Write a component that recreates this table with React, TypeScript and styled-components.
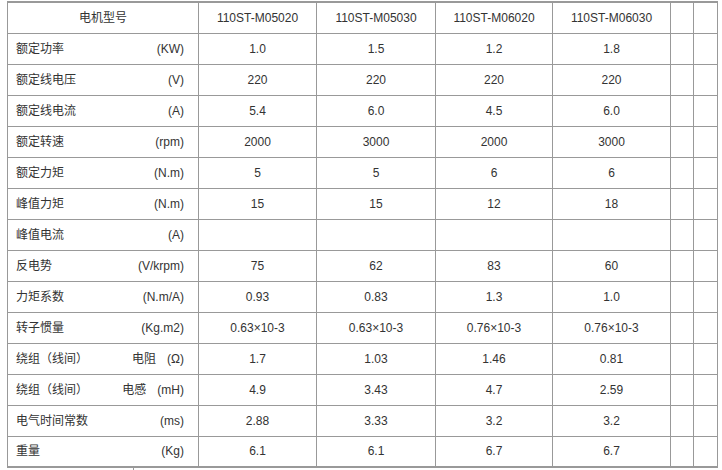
import styled, { createGlobalStyle } from 'styled-components'

const GlobalStyle = createGlobalStyle`
  html, body {
    margin: 0;
    padding: 0;
    background: #fff;
  }
`

type Row = {
  label: string
  sub?: string
  unit: string
  values: string[]
}

const models = ['110ST-M05020', '110ST-M05030', '110ST-M06020', '110ST-M06030']

const rows: Row[] = [
  { label: '额定功率', unit: '(KW)', values: ['1.0', '1.5', '1.2', '1.8'] },
  { label: '额定线电压', unit: '(V)', values: ['220', '220', '220', '220'] },
  { label: '额定线电流', unit: '(A)', values: ['5.4', '6.0', '4.5', '6.0'] },
  { label: '额定转速', unit: '(rpm)', values: ['2000', '3000', '2000', '3000'] },
  { label: '额定力矩', unit: '(N.m)', values: ['5', '5', '6', '6'] },
  { label: '峰值力矩', unit: '(N.m)', values: ['15', '15', '12', '18'] },
  { label: '峰值电流', unit: '(A)', values: ['', '', '', ''] },
  { label: '反电势', unit: '(V/krpm)', values: ['75', '62', '83', '60'] },
  { label: '力矩系数', unit: '(N.m/A)', values: ['0.93', '0.83', '1.3', '1.0'] },
  { label: '转子惯量', unit: '(Kg.m2)', values: ['0.63×10-3', '0.63×10-3', '0.76×10-3', '0.76×10-3'] },
  { label: '绕组（线间）', sub: '电阻', unit: '(Ω)', values: ['1.7', '1.03', '1.46', '0.81'] },
  { label: '绕组（线间）', sub: '电感', unit: '(mH)', values: ['4.9', '3.43', '4.7', '2.59'] },
  { label: '电气时间常数', unit: '(ms)', values: ['2.88', '3.33', '3.2', '3.2'] },
  { label: '重量', unit: '(Kg)', values: ['6.1', '6.1', '6.7', '6.7'] },
]

const widths = [191, 118, 119, 117, 118, 23, 24]

const Page = styled.div`
  padding: 1px 0 0 7px;
  font-family: 'Liberation Sans', Arial, 'Noto Sans CJK SC', sans-serif;
  font-size: 12px;
  color: #333;
`

const Table = styled.table`
  width: 710px;
  table-layout: fixed;
  border-collapse: collapse;
  border-top: 2px solid #999;
  border-bottom: 2px solid #999;
`

const Tr = styled.tr`
  height: 31px;
`

const Cell = styled.td`
  border: 1px solid #999;
  padding: 0;
  text-align: center;
  vertical-align: middle;
  line-height: 16px;
`

const NameCell = styled(Cell)`
  text-align: left;
  padding: 0 14px 0 8px;
`

const NameLine = styled.div`
  display: flex;
  justify-content: space-between;
  align-items: center;
  white-space: nowrap;
`

const Sub = styled.span`
  margin-left: auto;
  margin-right: 11px;
`

const Below = styled.div`
  height: 2px;
  margin-left: 126px;
  border-left: 1px solid #999;
`

const App = () => {
  return (
    <>
      <GlobalStyle />
      <Page>
        <Table>
          <colgroup>
            {widths.map((w, i) => (
              <col key={i} style={{ width: w }} />
            ))}
          </colgroup>
          <tbody>
            <Tr>
              <Cell>{'电机型号'}</Cell>
              {models.map((m) => (
                <Cell key={m}>{m}</Cell>
              ))}
              <Cell />
              <Cell />
            </Tr>
            {rows.map((r, i) => (
              <Tr key={i}>
                <NameCell>
                  <NameLine>
                    <span>{r.label}</span>
                    {r.sub && <Sub>{r.sub}</Sub>}
                    <span>{r.unit}</span>
                  </NameLine>
                </NameCell>
                {r.values.map((v, j) => (
                  <Cell key={j}>{v}</Cell>
                ))}
                <Cell />
                <Cell />
              </Tr>
            ))}
          </tbody>
        </Table>
        <Below />
      </Page>
    </>
  )
}

export default App
